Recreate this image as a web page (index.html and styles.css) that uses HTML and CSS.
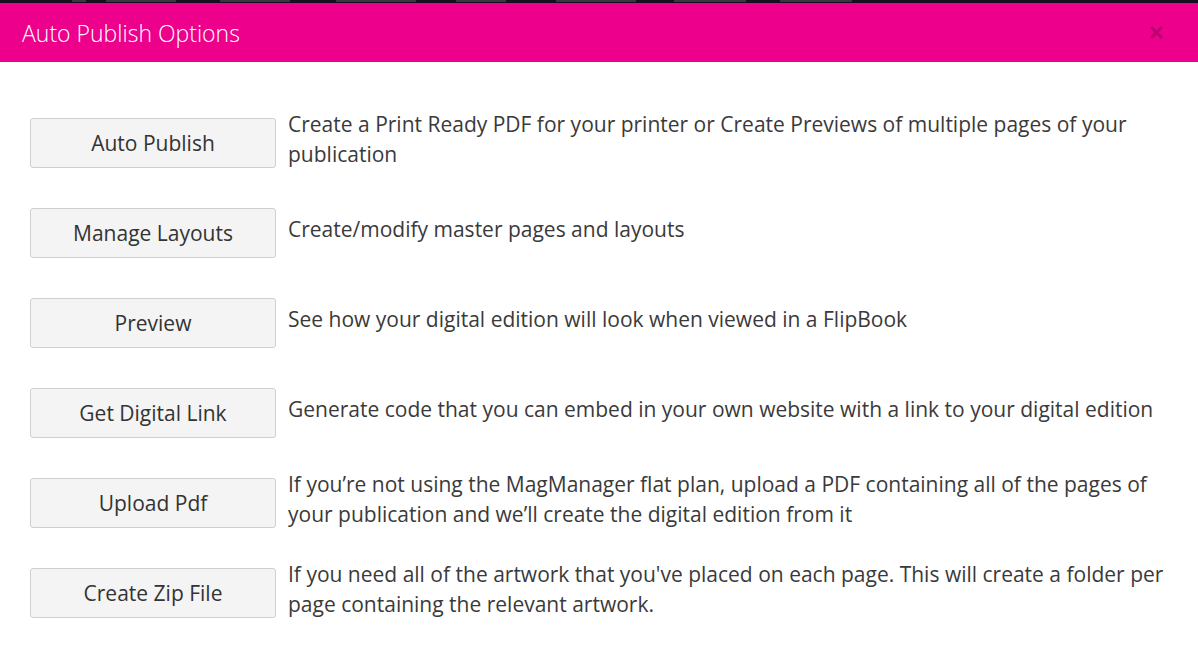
FILE: index.html
```html
<!DOCTYPE html>
<html lang="en">
<head>
<meta charset="utf-8">
<title>Auto Publish Options</title>
<link rel="stylesheet" href="styles.css">
</head>
<body>
<div class="topnav">
  <span class="nav-mark m1"></span>
  <span class="nav-mark m2"></span>
  <span class="nav-mark m3"></span>
  <span class="nav-mark m4"></span>
  <span class="nav-mark m5"></span>
  <span class="nav-mark m6"></span>
  <span class="nav-mark m7"></span>
  <span class="nav-mark m8"></span>
</div>
<div class="modal">
  <div class="modal-header">
    <h4 class="modal-title">Auto Publish Options</h4>
    <button class="close" aria-label="Close">
      <svg width="15" height="15" viewBox="0 0 15 15"><path d="M2 2 L13 13 M13 2 L2 13" stroke="currentColor" stroke-width="3" fill="none"/></svg>
    </button>
  </div>
  <div class="modal-body">
    <div class="option">
      <button class="btn">Auto Publish</button>
      <p class="desc">Create a Print Ready PDF for your printer or Create Previews of multiple pages of your publication</p>
    </div>
    <div class="option">
      <button class="btn">Manage Layouts</button>
      <p class="desc">Create/modify master pages and layouts</p>
    </div>
    <div class="option">
      <button class="btn">Preview</button>
      <p class="desc">See how your digital edition will look when viewed in a FlipBook</p>
    </div>
    <div class="option">
      <button class="btn">Get Digital Link</button>
      <p class="desc">Generate code that you can embed in your own website with a link to your digital edition</p>
    </div>
    <div class="option">
      <button class="btn">Upload Pdf</button>
      <p class="desc">If you’re not using the MagManager flat plan, upload a PDF containing all of the pages of your publication and we’ll create the digital edition from it</p>
    </div>
    <div class="option">
      <button class="btn">Create Zip File</button>
      <p class="desc">If you need all of the artwork that you've placed on each page. This will create a folder per page containing the relevant artwork.</p>
    </div>
  </div>
</div>
</body>
</html>
```
FILE: styles.css
```css
* { box-sizing: border-box; }
html, body {
  margin: 0;
  padding: 0;
  background: #fff;
  font-family: "Open Sans", "Liberation Sans", sans-serif;
  color: #333;
}
.topnav {
  height: 3px;
  background: #15101f;
  overflow: hidden;
  display: flex;
  align-items: flex-start;
}
.nav-mark {
  display: block;
  height: 2px;
  background: #3a3642;
}
.m1 { margin-left: 72px; width: 14px; }
.m2 { margin-left: 20px; width: 70px; }
.m3 { margin-left: 44px; width: 70px; }
.m4 { margin-left: 46px; width: 80px; }
.m5 { margin-left: 40px; width: 50px; }
.m6 { margin-left: 50px; width: 80px; }
.m7 { margin-left: 38px; width: 72px; }
.m8 { margin-left: 34px; width: 72px; }
.modal-header {
  height: 59px;
  background: #ec008c;
  display: flex;
  align-items: center;
  justify-content: space-between;
  padding: 0 34px 0 22px;
}
.modal-title {
  margin: 0;
  font-size: 23px;
  font-weight: 300;
  color: #fff;
  line-height: 30px;
}
.close {
  border: 0;
  background: none;
  padding: 0;
  width: 15px;
  height: 15px;
  color: rgba(0, 0, 0, 0.2);
  display: flex;
  cursor: pointer;
}
.modal-body {
  padding: 56px 30px 20px 30px;
  display: flex;
  flex-direction: column;
  gap: 40px;
}
.option {
  display: flex;
  align-items: center;
  gap: 12px;
  height: 50px;
}
.btn {
  flex: 0 0 246px;
  height: 50px;
  background: #f4f4f4;
  border: 1px solid #cfcfcf;
  border-radius: 3px;
  font-family: "Open Sans", "Liberation Sans", sans-serif;
  font-size: 21px;
  color: #333;
  padding: 0;
  cursor: pointer;
}
.desc {
  margin: 0 0 9px 0;
  font-size: 21px;
  line-height: 30px;
  color: #3a3a3a;
  max-width: 880px;
}
```
